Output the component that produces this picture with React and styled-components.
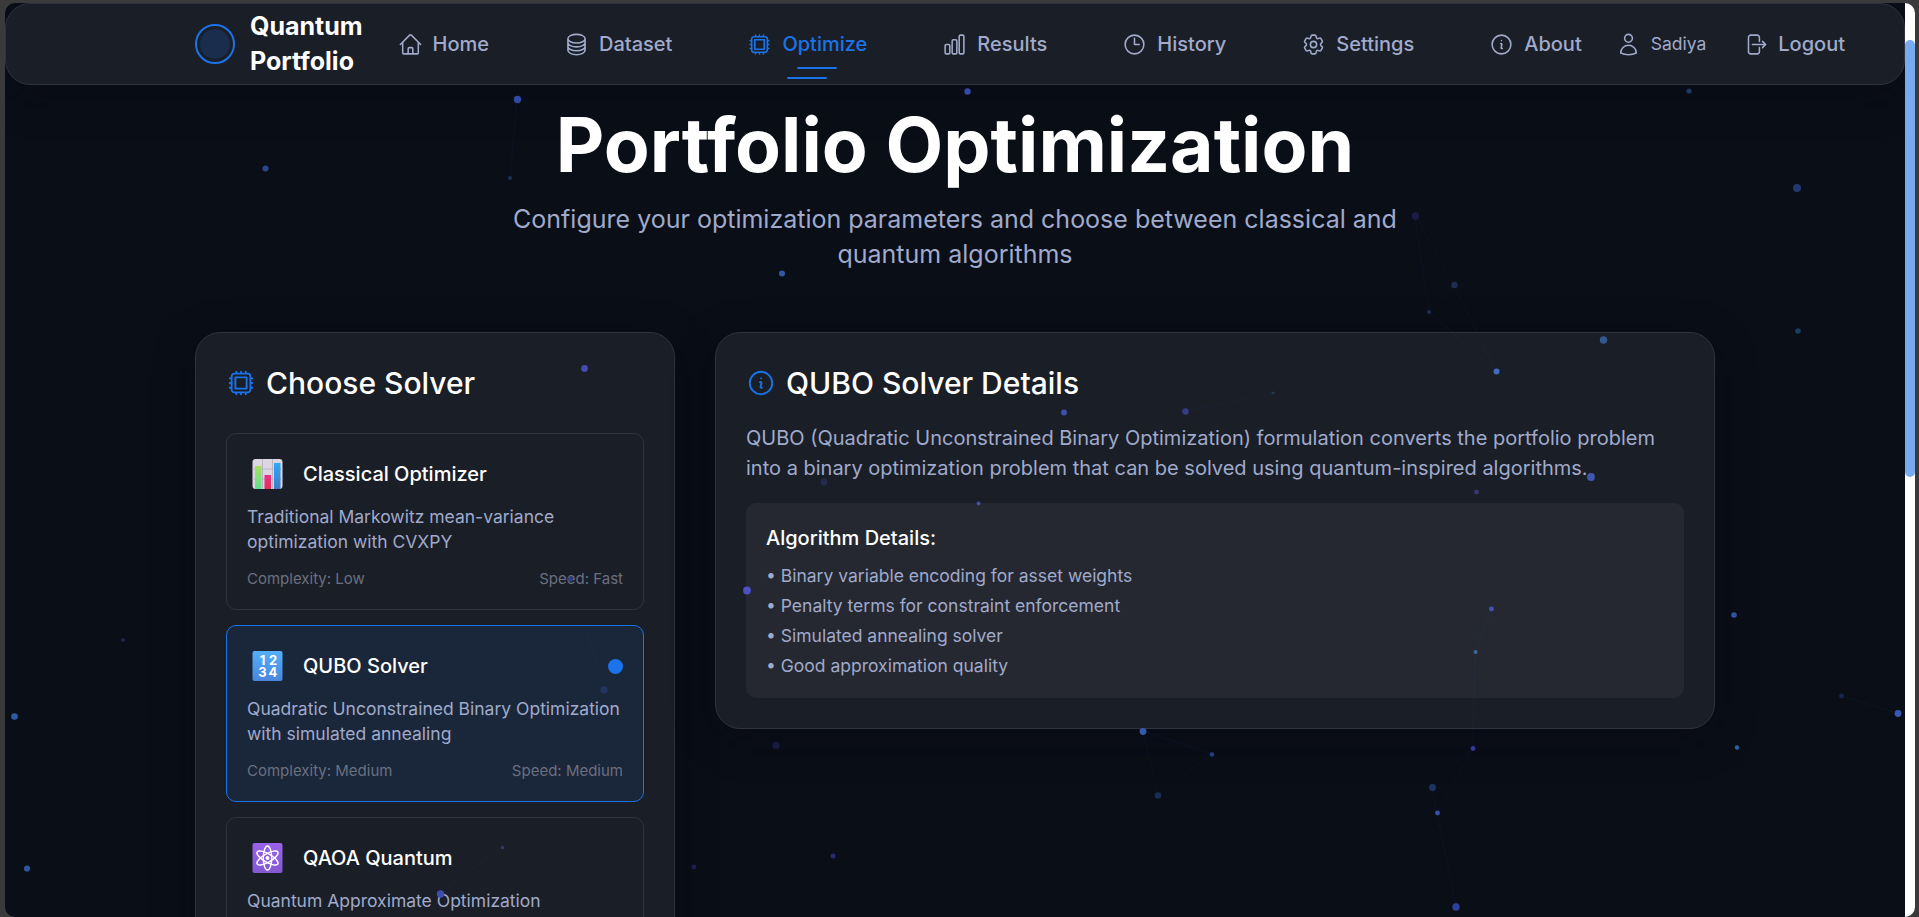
import React from "react";
import styled, { createGlobalStyle } from "styled-components";
import {
  HiOutlineHome,
  HiOutlineCircleStack,
  HiOutlineCpuChip,
  HiOutlineChartBar,
  HiOutlineClock,
  HiOutlineCog6Tooth,
  HiOutlineInformationCircle,
  HiOutlineUser,
  HiOutlineArrowRightOnRectangle,
} from "react-icons/hi2";

const GlobalStyle = createGlobalStyle`
  * {
    box-sizing: border-box;
    margin: 0;
    padding: 0;
  }
  body {
    height: 917px;
    overflow: hidden;
    background: #3a3a3a;
    font-family: Inter, "Liberation Sans", sans-serif;
    font-size: 20px;
    line-height: 30px;
  }
`;

const Frame = styled.div`
  position: relative;
  display: flex;
  width: 1910px;
  height: 914px;
  margin: 3px 0 0 5px;
  border-radius: 10px;
  overflow: hidden;
  background: #0a0e17;
`;

const Page = styled.div`
  width: 1900px;
  height: 914px;
  overflow: hidden;
`;

const ScrollTrack = styled.div`
  width: 10px;
  padding-top: 37px;
  background: #ffffff;
`;

const ScrollThumb = styled.div`
  height: 437px;
  border-radius: 5px;
  background: #78aaf2;
`;

const Particles = styled.svg`
  position: absolute;
  top: -3px;
  left: -5px;
  pointer-events: none;
`;

const HeaderNav = styled.nav`
  display: flex;
  align-items: center;
  height: 82px;
  padding: 0 59px 0 189px;
  border: 1px solid #30333c;
  border-radius: 25px;
  background: #1a1e27;
  box-shadow: 0 10px 40px 0 rgba(10, 8, 20, 0.35);
`;

const Brand = styled.div`
  display: flex;
  align-items: center;
  gap: 15px;
  width: 182.5px;
  color: #ffffff;
  font-size: 25px;
  font-weight: 700;
  line-height: 35px;
`;

const LogoRing = styled.div`
  width: 40px;
  height: 40px;
  padding: 3px;
  border: 2px solid #1a73e8;
  border-radius: 50%;
  flex-shrink: 0;
`;

const LogoCore = styled.div`
  width: 30px;
  height: 30px;
  border-radius: 50%;
  background: #1a2d4c;
`;

const NavLinks = styled.div`
  display: flex;
  gap: 35px;
`;

const NavItem = styled.a`
  position: relative;
  display: flex;
  align-items: center;
  gap: 10px;
  padding: 10px 20px;
  color: ${(props) => (props.$active ? "#1a73e8" : "#a0aacb")};
  font-weight: 500;
  svg {
    width: 25px;
    height: 25px;
  }
`;

const Underline = styled.span`
  position: absolute;
  left: ${(props) => props.$left}px;
  bottom: ${(props) => props.$bottom}px;
  width: 40px;
  height: 2px;
  border-radius: 2px;
  background: #1a73e8;
`;

const Account = styled.div`
  display: flex;
  margin-left: auto;
  gap: 37px;
`;

const AccountItem = styled.div`
  display: flex;
  align-items: center;
  gap: 10px;
  color: #a0aacb;
  font-size: ${(props) => (props.$small ? 17.5 : 20)}px;
  font-weight: ${(props) => (props.$small ? 400 : 500)};
  svg {
    width: 25px;
    height: 25px;
  }
`;

const Main = styled.main`
  width: 1520px;
  margin: 0 auto;
  padding-top: 22px;
`;

const Title = styled.h1`
  color: #ffffff;
  font-size: 75px;
  font-weight: 700;
  line-height: 75px;
  text-align: center;
`;

const Subtitle = styled.p`
  width: 960px;
  margin: 20px auto 60px;
  color: #a0aacb;
  font-size: 25px;
  line-height: 35px;
  text-align: center;
`;

const Columns = styled.div`
  display: grid;
  grid-template-columns: 480px 1000px;
  gap: 40px;
  align-items: start;
`;

const Card = styled.section`
  padding: 30px;
  border: 1px solid #30333c;
  border-radius: 25px;
  background: #1a1e27;
  box-shadow: 0 10px 40px 0 rgba(10, 8, 20, 0.35);
`;

const CardTitle = styled.h2`
  display: flex;
  align-items: center;
  gap: 10px;
  margin-bottom: ${(props) => props.$space}px;
  color: #ffffff;
  font-size: 30px;
  font-weight: 500;
  line-height: 40px;
  svg {
    width: 30px;
    height: 30px;
    color: #1a73e8;
  }
`;

const Solver = styled.div`
  height: 177px;
  margin-bottom: 15px;
  padding: 20px;
  border: 1px solid ${(props) => (props.$selected ? "#1a73e8" : "#30333c")};
  border-radius: 10px;
  background: ${(props) => (props.$selected ? "#1a2639" : "transparent")};
`;

const SolverHead = styled.div`
  display: flex;
  align-items: center;
  gap: 15px;
  height: 40px;
  margin-bottom: 10px;
  color: #ffffff;
  font-weight: 500;
  svg {
    width: 41px;
    height: 30px;
  }
`;

const SelectedDot = styled.span`
  width: 15px;
  height: 15px;
  margin-left: auto;
  border-radius: 50%;
  background: #1a73e8;
`;

const SolverText = styled.p`
  margin-bottom: 15px;
  color: #a0aacb;
  font-size: 17.5px;
  line-height: 25px;
`;

const SolverMeta = styled.div`
  display: flex;
  justify-content: space-between;
  color: #6b7080;
  font-size: 15px;
  line-height: 20px;
`;

const DetailsText = styled.p`
  margin-bottom: 20px;
  color: #a0aacb;
`;

const DetailsBox = styled.div`
  padding: 20px;
  border-radius: 10px;
  background: #252831;
`;

const DetailsHeading = styled.h3`
  margin-bottom: 10px;
  color: #ffffff;
  font-size: 20px;
  font-weight: 500;
  line-height: 30px;
`;

const DetailsList = styled.ul`
  display: flex;
  flex-direction: column;
  gap: 5px;
  color: #a0aacb;
  font-size: 17.5px;
  line-height: 25px;
  list-style: none;
`;

const ChartEmoji = () => (
  <svg viewBox="-5.5 0 41 30">
    <defs>
      <linearGradient id="green" x1="0" y1="0" x2="0" y2="1">
        <stop offset="0" stopColor="#a7e05a" />
        <stop offset="1" stopColor="#5fe094" />
      </linearGradient>
      <linearGradient id="pink" x1="0" y1="0" x2="0" y2="1">
        <stop offset="0" stopColor="#e8318a" />
        <stop offset="1" stopColor="#e03058" />
      </linearGradient>
      <linearGradient id="azure" x1="0" y1="0" x2="0" y2="1">
        <stop offset="0" stopColor="#2fa8f5" />
        <stop offset="1" stopColor="#3f7bc8" />
      </linearGradient>
    </defs>
    <rect width="30" height="30" rx="3" fill="#dcd5e2" />
    <path d="M10 0V30M20 0V30M0 10H30M0 20H30" stroke="#bdb4c8" strokeWidth="1" />
    <rect x="2.5" y="7" width="6.5" height="23" fill="url(#green)" />
    <rect x="12" y="16" width="6.5" height="14" fill="url(#pink)" />
    <rect x="21.5" y="4" width="6.5" height="26" fill="url(#azure)" />
  </svg>
);

const NumbersEmoji = () => (
  <svg viewBox="-5.5 0 41 30">
    <defs>
      <linearGradient id="keycap" x1="0" y1="0" x2="0" y2="1">
        <stop offset="0" stopColor="#55b0fb" />
        <stop offset="1" stopColor="#4a85dc" />
      </linearGradient>
    </defs>
    <rect width="30" height="30" rx="2" fill="url(#keycap)" />
    <g
      fill="#ffffff"
      fontFamily="Inter, sans-serif"
      fontSize="13"
      fontWeight="700"
      textAnchor="middle"
    >
      <text x="10" y="13.5">1</text>
      <text x="20.5" y="13.5">2</text>
      <text x="10" y="25.5">3</text>
      <text x="20.5" y="25.5">4</text>
    </g>
  </svg>
);

const AtomEmoji = () => (
  <svg viewBox="-5.5 0 41 30">
    <defs>
      <linearGradient id="violet" x1="0" y1="0" x2="0" y2="1">
        <stop offset="0" stopColor="#9a62ea" />
        <stop offset="1" stopColor="#8259cf" />
      </linearGradient>
    </defs>
    <rect width="30" height="30" rx="2" fill="url(#violet)" />
    <g fill="none" stroke="#ffffff" strokeWidth="1.4">
      <ellipse cx="15" cy="15" rx="4.2" ry="12" />
      <ellipse cx="15" cy="15" rx="4.2" ry="12" transform="rotate(60 15 15)" />
      <ellipse cx="15" cy="15" rx="4.2" ry="12" transform="rotate(120 15 15)" />
    </g>
    <circle cx="15" cy="15" r="2" fill="#ffffff" />
  </svg>
);

const navItems = [
  { label: "Home", icon: HiOutlineHome },
  { label: "Dataset", icon: HiOutlineCircleStack },
  { label: "Optimize", icon: HiOutlineCpuChip, active: true },
  { label: "Results", icon: HiOutlineChartBar },
  { label: "History", icon: HiOutlineClock },
  { label: "Settings", icon: HiOutlineCog6Tooth },
  { label: "About", icon: HiOutlineInformationCircle },
];

const solvers = [
  {
    name: "Classical Optimizer",
    icon: ChartEmoji,
    text: "Traditional Markowitz mean-variance optimization with CVXPY",
    complexity: "Low",
    speed: "Fast",
  },
  {
    name: "QUBO Solver",
    icon: NumbersEmoji,
    text: "Quadratic Unconstrained Binary Optimization with simulated annealing",
    complexity: "Medium",
    speed: "Medium",
    selected: true,
  },
  {
    name: "QAOA Quantum",
    icon: AtomEmoji,
    text: "Quantum Approximate Optimization",
  },
];

const details = [
  "Binary variable encoding for asset weights",
  "Penalty terms for constraint enforcement",
  "Simulated annealing solver",
  "Good approximation quality",
];

// x, y, radius, colour
const dots = [
  [517.5, 99.5, 3.7, "#3347a6"],
  [265.5, 168.5, 3, "#2a468c"],
  [510, 178, 2, "#1b3054"],
  [967.5, 91.5, 3.2, "#344aa6"],
  [782, 273.5, 3, "#3059a6"],
  [1689, 91, 2.6, "#1b3a62"],
  [1797, 188, 4, "#233670"],
  [1415.5, 216, 3.7, "#191c47"],
  [1454.5, 285, 3.2, "#1b2e52"],
  [1429, 312, 2, "#1b3054"],
  [1798, 331, 2.8, "#1b3c60"],
  [1603.5, 340, 3.7, "#33588f"],
  [1496.5, 371.5, 3, "#416bc0"],
  [584.5, 368.5, 3.4, "#424bb0"],
  [570.5, 579, 2.6, "#343d86"],
  [604, 690, 3.7, "#233463"],
  [1064, 412.5, 3, "#3d51aa"],
  [1185.5, 411.5, 3.2, "#343d86"],
  [1273, 393, 1.6, "#203a50"],
  [824, 482, 3.4, "#262b50"],
  [978.5, 503.5, 2, "#4250a0"],
  [747, 590.5, 3.9, "#4c50c0"],
  [1591, 477, 3.9, "#4058b0"],
  [1476.5, 492, 2.4, "#343774"],
  [1491.5, 609, 2.4, "#4355b4"],
  [1475.5, 652, 2, "#3d689c"],
  [1734, 615, 2.8, "#3050a0"],
  [1841.5, 696, 2.4, "#18264c"],
  [1898, 713.5, 3.4, "#3559b4"],
  [1737, 747.5, 2.2, "#2d609c"],
  [1143, 731.5, 3.4, "#3159ac"],
  [1212, 754.5, 2.2, "#233f7c"],
  [1158, 795.5, 3.3, "#182c54"],
  [776, 745.5, 3.5, "#171a43"],
  [833, 856, 2.5, "#252b6e"],
  [694, 867, 2.4, "#1b1d50"],
  [1473, 748.5, 2.4, "#3538a0"],
  [1432.5, 787.5, 3.4, "#1c355f"],
  [1437.5, 813, 2.4, "#3550ac"],
  [1456, 907, 3.7, "#2e409c"],
  [123, 640, 2, "#18284a"],
  [14.5, 716.5, 3.3, "#2d5ca4"],
  [27, 868.5, 3.1, "#2c559b"],
  [502.5, 847.5, 1.8, "#2b3a6c"],
  [440.5, 894, 3.7, "#3e4eae"],
];

const links = [
  "M517 99L510 178",
  "M1415 216L1454 285L1429 312L1415 216",
  "M1454 285L1496 371L1429 312",
  "M1185 411L1273 393",
  "M1491 609L1475 652L1473 748",
  "M1841 696L1898 713",
  "M1143 731L1212 754L1158 795L1143 731",
  "M1473 748L1432 787L1437 813L1473 748",
  "M1437 813L1456 907",
  "M502 847L440 894",
  "M586 629L604 690",
];

const App = () => {
  return (
    <>
      <GlobalStyle />
      <Frame>
        <Page>
          <HeaderNav>
            <Brand>
              <LogoRing>
                <LogoCore />
              </LogoRing>
              <div>
                Quantum
                <br />
                Portfolio
              </div>
            </Brand>
            <NavLinks>
              {navItems.map(({ label, icon: Icon, active }) => (
                <NavItem key={label} $active={active}>
                  <Icon />
                  {label}
                  {active && <Underline $left={70} $bottom={0} />}
                  {active && <Underline $left={60} $bottom={-10} />}
                </NavItem>
              ))}
            </NavLinks>
            <Account>
              <AccountItem $small>
                <HiOutlineUser />
                Sadiya
              </AccountItem>
              <AccountItem>
                <HiOutlineArrowRightOnRectangle />
                Logout
              </AccountItem>
            </Account>
          </HeaderNav>

          <Main>
            <Title>Portfolio Optimization</Title>
            <Subtitle>
              Configure your optimization parameters and choose between
              classical and quantum algorithms
            </Subtitle>
            <Columns>
              <Card>
                <CardTitle $space={30}>
                  <HiOutlineCpuChip />
                  Choose Solver
                </CardTitle>
                {solvers.map(({ icon: Icon, ...solver }) => (
                  <Solver key={solver.name} $selected={solver.selected}>
                    <SolverHead>
                      <Icon />
                      {solver.name}
                      {solver.selected && <SelectedDot />}
                    </SolverHead>
                    <SolverText>{solver.text}</SolverText>
                    {solver.complexity && (
                      <SolverMeta>
                        <span>Complexity: {solver.complexity}</span>
                        <span>Speed: {solver.speed}</span>
                      </SolverMeta>
                    )}
                  </Solver>
                ))}
              </Card>
              <Card>
                <CardTitle $space={20}>
                  <HiOutlineInformationCircle />
                  QUBO Solver Details
                </CardTitle>
                <DetailsText>
                  QUBO (Quadratic Unconstrained Binary Optimization) formulation
                  converts the portfolio problem into a binary optimization
                  problem that can be solved using quantum-inspired algorithms.
                </DetailsText>
                <DetailsBox>
                  <DetailsHeading>Algorithm Details:</DetailsHeading>
                  <DetailsList>
                    {details.map((item) => (
                      <li key={item}>• {item}</li>
                    ))}
                  </DetailsList>
                </DetailsBox>
              </Card>
            </Columns>
          </Main>
        </Page>
        <ScrollTrack>
          <ScrollThumb />
        </ScrollTrack>
        <Particles width="1919" height="917">
          {links.map((d) => (
            <path key={d} d={d} fill="none" stroke="#1a73e8" strokeOpacity="0.06" />
          ))}
          {dots.map(([x, y, r, color]) => (
            <circle key={`${x}-${y}`} cx={x} cy={y} r={r} fill={color} />
          ))}
        </Particles>
      </Frame>
    </>
  );
};

export default App;
